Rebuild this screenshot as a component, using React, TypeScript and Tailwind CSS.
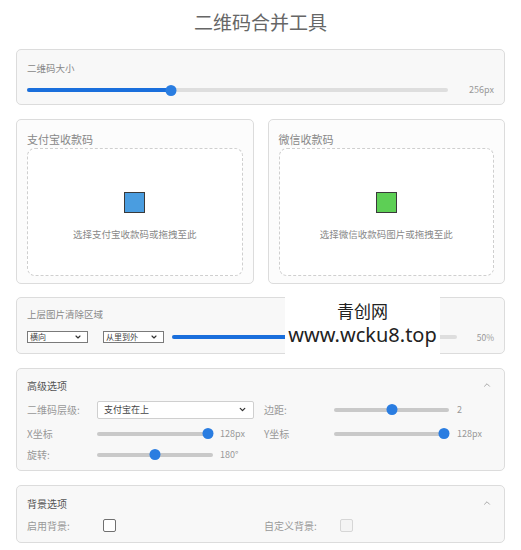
import React from 'react';
import { ChevronDown, ChevronUp } from 'lucide-react';

const font = { fontFamily: '"Noto Sans CJK SC", "Noto Sans", sans-serif' };

interface RangeProps {
  pct: number;
  fill?: boolean;
  className?: string;
  track?: string;
}

const Range: React.FC<RangeProps> = ({ pct, fill, className = '', track = 'bg-[#dedede]' }) => (
  <div className={`relative h-[12px] flex items-center shrink-0 ${className}`}>
    <div className={`h-[4px] w-full rounded-full ${track}`} />
    {fill && (
      <div
        className="absolute left-0 h-[4px] rounded-full bg-[#1a6fdc]"
        style={{ width: `calc(5px + (100% - 10px) * ${pct / 100})` }}
      />
    )}
    <div
      className="absolute w-[11px] h-[11px] rounded-full bg-[#2a7de1] -translate-x-1/2"
      style={{ left: `calc(5px + (100% - 10px) * ${pct / 100})` }}
    />
  </div>
);

const MiniSelect: React.FC<{ label: string }> = ({ label }) => (
  <div className="w-[61px] h-[12px] border border-[#7a7a7a] bg-white flex items-center justify-between pl-[2px] pr-[5px] text-[8px] leading-none text-[#444]">
    <span>{label}</span>
    <ChevronDown size={8} strokeWidth={3.5} className="text-[#333]" />
  </div>
);

const UploadCard: React.FC<{ title: string; hint: string; color: string }> = ({ title, hint, color }) => (
  <div className="flex-1 border border-[#dcdcdc] rounded-[5px] bg-[#fcfcfc] px-[10px] pt-[12px] pb-[7px]">
    <div className="text-[11px] leading-[14px] text-[#888]">{title}</div>
    <div className="mt-[2px] h-[128px] border border-dashed border-[#cfcfcf] rounded-[8px] bg-white flex flex-col items-center pt-[43px]">
      <div className={`w-[21px] h-[21px] border border-[#3a3a3a] ${color}`} />
      <div className="mt-[14px] text-[9.5px] leading-[14px] text-[#888]">{hint}</div>
    </div>
  </div>
);

export default function App() {
  return (
    <div className="w-[521px] h-[550px] bg-white overflow-hidden" style={font}>
      <div className="pt-[9px] text-center text-[19px] leading-[26px] text-[#666]">二维码合并工具</div>

      <div className="mx-[16px] mt-[14px] flex flex-col gap-[14px]">
        {/* size */}
        <div className="border border-[#dcdcdc] rounded-[5px] bg-[#f8f8f8] pl-[10px] pr-[10px] pt-[11px] pb-[6px]">
          <div className="text-[9.5px] leading-[14px] text-[#888]">二维码大小</div>
          <div className="mt-[7px] flex items-center h-[16px]">
            <Range pct={33.7} fill className="w-[421px]" />
            <span className="ml-auto text-[9px] text-[#999]">256px</span>
          </div>
        </div>

        {/* uploads */}
        <div className="flex gap-[14px]">
          <UploadCard title="支付宝收款码" hint="选择支付宝收款码或拖拽至此" color="bg-[#4a9de0]" />
          <UploadCard title="微信收款码" hint="选择微信收款码图片或拖拽至此" color="bg-[#5dcf55]" />
        </div>

        {/* clear area */}
        <div className="relative -mt-[1px] border border-[#dcdcdc] rounded-[5px] bg-[#f8f8f8] px-[10px] pt-[9px] pb-[10px]">
          <div className="text-[9.5px] leading-[14px] text-[#888]">上层图片清除区域</div>
          <div className="mt-[10px] flex items-center h-[12px]">
            <MiniSelect label="横向" />
            <div className="ml-[15px]">
              <MiniSelect label="从里到外" />
            </div>
            <Range pct={50} fill className="ml-[8px] w-[285px]" />
            <span className="ml-auto text-[8.5px] text-[#999]">50%</span>
          </div>
          <div className="absolute left-[268px] top-[-5px] w-[155px] h-[62px] bg-white flex flex-col items-center justify-center text-[#222]">
            <div className="text-[17px] leading-[22px]">青创网</div>
            <div className="text-[20px] leading-[26px]" style={{ fontFamily: '"Noto Sans", sans-serif' }}>www.wcku8.top</div>
          </div>
        </div>

        {/* advanced */}
        <div className="border border-[#dcdcdc] rounded-[5px] bg-[#f8f8f8] px-[10px] pt-[9px] pb-[7px] text-[10px] text-[#999]">
          <div className="flex items-center h-[14px]">
            <span className="text-[10px] text-[#555]">高级选项</span>
            <ChevronUp size={10} strokeWidth={2} className="ml-auto mr-[2px] text-[#999]" />
          </div>
          <div className="mt-[9px] flex items-center h-[17px]">
            <div className="w-[70px]">二维码层级:</div>
            <div className="w-[157px] h-[18px] border border-[#cfcfcf] rounded-[2px] bg-white flex items-center justify-between pl-[6px] pr-[6px] text-[9px] text-[#444]">
              <span>支付宝在上</span>
              <ChevronDown size={9} strokeWidth={3.5} className="text-[#333]" />
            </div>
            <div className="ml-[10px] w-[70px]">边距:</div>
            <Range pct={50} className="w-[115px]" track="bg-[#c9c9c9]" />
            <span className="ml-[8px] text-[9px]">2</span>
          </div>
          <div className="mt-[7px] flex items-center h-[17px]">
            <div className="w-[70px]">X坐标</div>
            <Range pct={100} className="w-[116px]" track="bg-[#c9c9c9]" />
            <span className="ml-[7px] w-[34px] text-[9px]">128px</span>
            <div className="ml-[10px] w-[70px]">Y坐标</div>
            <Range pct={100} className="w-[115px]" track="bg-[#c9c9c9]" />
            <span className="ml-[8px] text-[9px]">128px</span>
          </div>
          <div className="mt-[4px] flex items-center h-[17px]">
            <div className="w-[70px]">旋转:</div>
            <Range pct={50} className="w-[116px]" track="bg-[#c9c9c9]" />
            <span className="ml-[7px] text-[9px]">180°</span>
          </div>
        </div>

        {/* background */}
        <div className="border border-[#dcdcdc] rounded-[5px] bg-[#f8f8f8] px-[10px] pt-[10px] pb-[9px] text-[10px] text-[#999]">
          <div className="flex items-center h-[14px]">
            <span className="text-[10px] text-[#555]">背景选项</span>
            <ChevronUp size={10} strokeWidth={2} className="ml-auto mr-[2px] text-[#999]" />
          </div>
          <div className="mt-[7px] flex items-center h-[16px]">
            <div className="w-[76px]">启用背景:</div>
            <div className="w-[13px] h-[13px] border border-[#707070] rounded-[2px] bg-white" />
            <div className="ml-[148px] w-[76px]">自定义背景:</div>
            <div className="w-[13px] h-[13px] border border-[#d6d6d6] rounded-[2px] bg-[#f4f4f4]" />
          </div>
        </div>
      </div>
    </div>
  );
}
